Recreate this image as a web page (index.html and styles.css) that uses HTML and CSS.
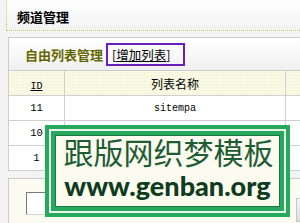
FILE: index.html
```html
<!DOCTYPE html>
<html>
<head>
<meta charset="utf-8">
<link rel="stylesheet" href="styles.css">
</head>
<body>
<div class="page">
  <div class="top-box"><span class="top-title">频道管理</span></div>
  <div class="panel">
    <div class="panel-head">
      <span class="panel-title">自由列表管理</span>
      <span class="add-box">[<a class="add-link" href="#">增加列表</a>]</span>
    </div>
    <table class="list">
      <colgroup><col class="c1"><col class="c2"><col class="c3"></colgroup>
      <tr class="head-row"><th><a class="id-link" href="#">ID</a></th><th class="name-head">列表名称</th><th></th></tr>
      <tr><td class="num">11</td><td class="mono">sitempa</td><td></td></tr>
      <tr><td class="num">10</td><td class="mono"></td><td></td></tr>
      <tr><td class="num">1</td><td class="mono"></td><td></td></tr>
    </table>
  </div>
  <div class="form-box">
    <div class="field"></div>
    <div class="btn"></div>
  </div>
</div>
<div class="wm">
  <div class="wm-inner">
    <div class="wm-cn">跟版网织梦模板</div>
    <div class="wm-en">www.genban.org</div>
  </div>
</div>
</body>
</html>
```
FILE: styles.css
```css
html, body {
  margin: 0;
  padding: 0;
  overflow: hidden;
}
body {
  width: 300px;
  height: 223px;
  background: #f3f3f3;
  font-family: "Noto Sans CJK SC", "Liberation Sans", sans-serif;
  font-size: 12px;
  color: #000;
  position: relative;
}
.page {
  width: 300px;
  height: 223px;
  overflow: hidden;
}
.top-box {
  margin-left: 6px;
  width: 320px;
  height: 31px;
  box-sizing: border-box;
  border-left: 1px dotted #b5d46a;
  border-bottom: 1px dotted #b5d46a;
  background: linear-gradient(#ffffff, #f2f2f2);
  display: flex;
  align-items: center;
  padding-left: 10px;
}
.top-title {
  font-size: 13px;
  font-weight: bold;
  line-height: 13px;
  margin-top: 2px;
}
.panel {
  margin-left: 8px;
  margin-top: 6px;
  width: 332px;
}
.panel-head {
  height: 34px;
  box-sizing: border-box;
  border: 1px solid #cccccc;
  border-right: none;
  background: linear-gradient(#ffffff, #f0f0f0);
  display: flex;
  align-items: center;
  padding-left: 16px;
}
.panel-title {
  font-size: 13px;
  font-weight: bold;
  color: #666600;
  margin-right: 3px;
}
.add-box {
  display: flex;
  align-items: center;
  height: 23px;
  width: 79px;
  box-sizing: border-box;
  border: 2px solid #6a1fbd;
  padding-left: 4px;
  font-size: 12.5px;
  margin-top: 1px;
}
.add-link {
  color: #000;
  text-decoration: underline;
}
.list {
  border-collapse: collapse;
  table-layout: fixed;
  width: 332px;
}
.c1 { width: 56px; }
.c2 { width: 221px; }
.c3 { width: 55px; }
.list th, .list td {
  border: 1px solid #cfcfcf;
  border-top: none;
  height: 24px;
  padding: 0;
  text-align: center;
  background: #ffffff;
}
.list tr.head-row th {
  background-color: #f9f9e4;
  background-image: radial-gradient(circle, #ecebd2 0.6px, transparent 0.8px);
  background-size: 3px 3px;
  font-weight: normal;
  font-size: 12px;
}
.id-link {
  color: #000;
  font-family: "Liberation Mono", monospace;
  font-size: 10px;
  text-decoration: underline;
}
.num {
  font-family: "Liberation Mono", monospace;
  font-size: 10.5px;
}
.mono {
  font-family: "Liberation Mono", monospace;
  font-size: 10px;
}
.form-box {
  margin-left: 8px;
  margin-top: 7px;
  width: 332px;
  height: 60px;
  box-sizing: border-box;
  border: 1px solid #cccccc;
  border-right: none;
  background: #fbfbf1;
  display: flex;
  align-items: flex-start;
  padding-left: 17px;
  padding-top: 13px;
}
.field {
  width: 250px;
  height: 23px;
  box-sizing: border-box;
  background: #ffffff;
  border-top: 1px solid #7a7a7a;
  border-left: 1px solid #7a7a7a;
  border-bottom: 1px solid #d4d4d4;
  border-right: 1px solid #d4d4d4;
}
.btn {
  margin-left: 20px;
  margin-top: 6px;
  width: 30px;
  height: 22px;
  background: linear-gradient(#f6f6f6, #dcdcdc);
  border: 1px solid #c8c8c8;
}
.wm {
  position: absolute;
  left: 45px;
  top: 125px;
  width: 245px;
  height: 92px;
  box-sizing: border-box;
  border: 4px solid #27a85c;
  background: #e6f6ea;
  padding: 2px;
}
.wm-inner {
  height: 100%;
  box-sizing: border-box;
  border: 4px solid #27a85c;
  background: #fbfbef;
  box-shadow: inset 0 0 0 1px #1b7a44;
  display: flex;
  flex-direction: column;
  align-items: center;
}
.wm-cn {
  font-family: "Noto Sans CJK SC", sans-serif;
  font-size: 30px;
  line-height: 30px;
  color: #1e5c34;
  margin-top: 1px;
  margin-left: 2px;
}
.wm-en {
  font-family: "Lato", "DejaVu Sans", sans-serif;
  font-weight: 900;
  font-size: 27px;
  line-height: 28px;
  color: #0f3b20;
  margin-top: 6px;
}
```
